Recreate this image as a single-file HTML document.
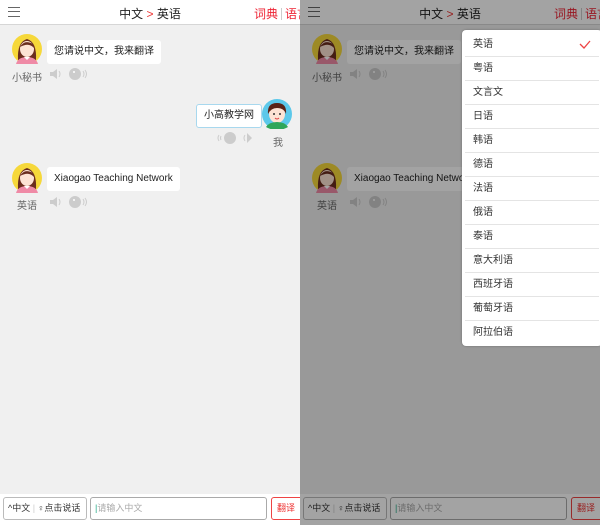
<!DOCTYPE html>
<html><head><meta charset="utf-8"><style>
*{margin:0;padding:0;box-sizing:border-box}
body{width:600px;height:525px;overflow:hidden;font-family:"Liberation Sans","Noto Sans CJK SC",sans-serif;background:#f0f0f0;position:relative}
.panel{position:absolute;top:0;width:300px;height:525px;background:#f0f0f0;overflow:hidden}
.hdr{position:absolute;left:0;top:0;width:300px;height:25px;background:#fff;border-bottom:1px solid #d6d6d6}
.menu{position:absolute;left:8px;top:7px;width:12px;height:10px;border-top:1px solid #666;border-bottom:1px solid #666}
.menu:after{content:"";position:absolute;left:0;top:3px;width:12px;height:1px;background:#666}
.title{position:absolute;left:0;width:300px;top:5px;text-align:center;font-size:12px;color:#222}
.title b{color:#e33;font-weight:normal}
.tabs{position:absolute;left:254px;top:5px;font-size:12px;color:#e23;white-space:nowrap}
.tabs i{display:inline-block;width:1px;height:12px;background:#ccc;margin:0 3px;vertical-align:-2px}
.av{position:absolute;width:30px;height:30px}
.bub{position:absolute;background:#fff;font-size:10px;color:#222;height:24px;line-height:24px;padding:0 7px;border-radius:3px;white-space:nowrap}
.lbl{position:absolute;font-size:10px;color:#666;white-space:nowrap}
.spk{position:absolute;width:40px;height:14px}
.bot{position:absolute;left:0;top:494px;width:300px;height:31px;background:#fff}
.b1{position:absolute;left:3px;top:3px;width:84px;height:23px;border:1px solid #bbb;border-radius:3px;font-size:9px;color:#333;line-height:21px;padding-left:4px;white-space:nowrap}
.b2{position:absolute;left:90px;top:3px;width:177px;height:23px;border:1px solid #aaa;border-radius:3px;font-size:9px;color:#aaa;line-height:21px;padding-left:4px}
.b3{position:absolute;left:271px;top:3px;width:34px;height:23px;border:1px solid #e44;border-radius:3px;font-size:9px;color:#e33;line-height:21px;padding-left:5px}
.dim{position:absolute;left:300px;top:0;width:300px;height:525px;background:rgba(0,0,0,0.36)}
.dd{position:absolute;left:462px;top:30px;width:140px;height:316px;background:#fff;border-radius:4px;box-shadow:0 0 2px rgba(0,0,0,.3)}
.dd div{height:24px;line-height:24px;margin:0 3px;padding-left:8px;font-size:10px;color:#333;border-bottom:1px solid #e4e4e4;position:relative}
.dd div:first-child{margin-top:3px}
.dd div:last-child{border-bottom:none}
</style></head><body>
<svg width="0" height="0" style="position:absolute"><defs>
<g id="girl"><circle cx="15" cy="15" r="15" fill="#f6d83a"/><path d="M6 26 Q5 8 15 5 Q25 8 24 26Z" fill="#6b2d1e"/><ellipse cx="15" cy="15" rx="7" ry="8" fill="#fde3d4"/><path d="M8 13 Q12 6 19 9 Q22 10 22 14 Q17 8 8 13Z" fill="#6b2d1e"/><path d="M4 30 Q6 23 15 23 Q24 23 26 30Z" fill="#ef8aa6"/><path d="M12 23 L15 26 L18 23Z" fill="#fff"/><circle cx="15" cy="15" r="15" fill="none"/></g>
<g id="boy"><circle cx="15" cy="15" r="15" fill="#5bc8ea"/><ellipse cx="15" cy="15" rx="8" ry="9" fill="#fde3d4"/><path d="M6 15 Q5 4 15 4 Q25 4 24 15 Q22 9 15 9 Q9 9 6 15Z" fill="#5a2216"/><path d="M4 28 Q7 23 15 23 Q23 23 26 28 Q21 31 15 31 Q9 31 4 28Z" fill="#2fa65a"/><circle cx="12" cy="15" r="1" fill="#333"/><circle cx="18" cy="15" r="1" fill="#333"/><path d="M13 19 Q15 21 17 19" stroke="#d44" fill="none"/></g>
<g id="spk"><path d="M1 5h3l4-3v10l-4-3H1z" fill="#ccc"/><path d="M10 4q2 3 0 6" stroke="#ccc" fill="none"/><circle cx="26" cy="7" r="6" fill="#ccc"/><circle cx="25" cy="5" r="1" fill="#fff"/><path d="M34 4q2 3 0 6M36 3q3 4 0 8" stroke="#ccc" fill="none"/></g>
<g id="spkr"><path d="M3 4q-2 3 0 6M5 5q-1 2 0 4" stroke="#ccc" fill="none"/><circle cx="14" cy="7" r="6" fill="#ccc"/><path d="M29 4q-2 3 0 6" stroke="#ccc" fill="none"/><path d="M31 2l5 5-5 5z" fill="#ccc"/></g>
</defs></svg>

<div class="panel" style="left:0" id="p1">
<div class="hdr"><div class="menu"></div><div class="title">中文 <b>&gt;</b> 英语</div><div class="tabs">词典<i></i>语言</div></div>
<svg class="av" style="left:12px;top:34px"><use href="#girl"/></svg>
<div class="bub" style="left:47px;top:40px">您请说中文，我来翻译</div>
<div class="lbl" style="left:12px;top:69px">小秘书</div>
<svg class="spk" style="left:49px;top:67px"><use href="#spk"/></svg>
<svg class="av" style="left:262px;top:99px"><use href="#boy"/></svg>
<div class="bub" style="left:196px;top:104px;border:1px solid #a8d8ee;line-height:22px">小高教学网</div>
<div class="lbl" style="left:273px;top:134px">我</div>
<svg class="spk" style="left:216px;top:131px"><use href="#spkr"/></svg>
<svg class="av" style="left:12px;top:163px"><use href="#girl"/></svg>
<div class="bub" style="left:47px;top:167px">Xiaogao Teaching Network</div>
<div class="lbl" style="left:17px;top:197px">英语</div>
<svg class="spk" style="left:49px;top:195px"><use href="#spk"/></svg>
<div class="bot"><div class="b1">^中文 <span style="color:#ccc">|</span> ♀点击说话</div><div class="b2"><span style="color:#2a8">|</span>请输入中文</div><div class="b3">翻译</div></div>
</div>

<div class="panel" style="left:300px">
<div class="hdr"><div class="menu"></div><div class="title">中文 <b>&gt;</b> 英语</div><div class="tabs">词典<i></i>语言</div></div>
<svg class="av" style="left:12px;top:34px"><use href="#girl"/></svg>
<div class="bub" style="left:47px;top:40px">您请说中文，我来翻译</div>
<div class="lbl" style="left:12px;top:69px">小秘书</div>
<svg class="spk" style="left:49px;top:67px"><use href="#spk"/></svg>
<svg class="av" style="left:12px;top:163px"><use href="#girl"/></svg>
<div class="bub" style="left:47px;top:167px">Xiaogao Teaching Network</div>
<div class="lbl" style="left:17px;top:197px">英语</div>
<svg class="spk" style="left:49px;top:195px"><use href="#spk"/></svg>
<div class="bot"><div class="b1">^中文 <span style="color:#ccc">|</span> ♀点击说话</div><div class="b2"><span style="color:#2a8">|</span>请输入中文</div><div class="b3">翻译</div></div>
</div>
<div class="dim"></div>
<div class="dd">
<div>英语<svg style="position:absolute;right:8px;top:7px" width="12" height="9"><path d="M1 4l4 4 6-7" stroke="#e44" stroke-width="1.3" fill="none"/></svg></div>
<div>粤语</div><div>文言文</div><div>日语</div><div>韩语</div><div>德语</div><div>法语</div><div>俄语</div><div>泰语</div><div>意大利语</div><div>西班牙语</div><div>葡萄牙语</div><div>阿拉伯语</div>
</div>
</body></html>
